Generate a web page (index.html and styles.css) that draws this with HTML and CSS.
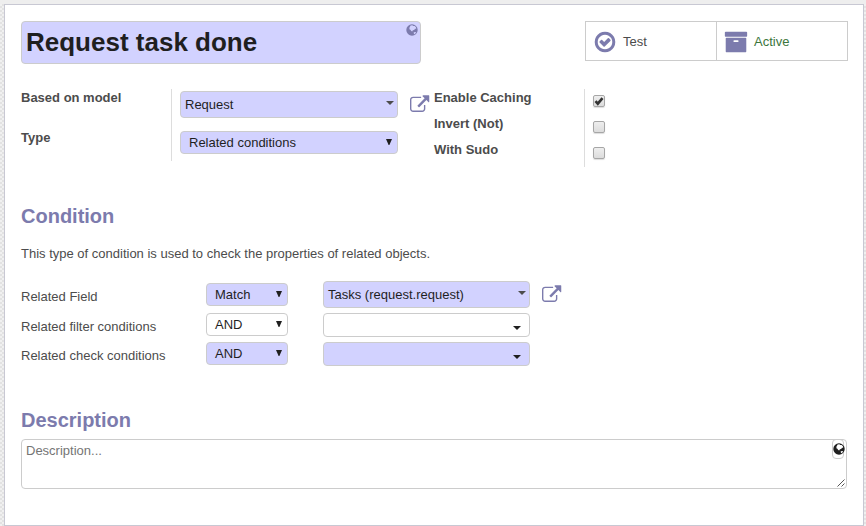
FILE: index.html
```html
<!DOCTYPE html>
<html lang="en">
<head>
<meta charset="utf-8">
<title>Request task done</title>
<link rel="stylesheet" href="styles.css">
</head>
<body>
<svg class="defs" aria-hidden="true">
  <symbol id="check" viewBox="0 0 1792 1792"><path d="M1299 813l-422 422q-19 19-45 19t-45-19l-294-294q-19-19-19-45t19-45l102-102q19-19 45-19t45 19l147 147 275-275q19-19 45-19t45 19l102 102q19 19 19 45t-19 45zm141 83q0-148-73-273t-198-198-273-73-273 73-198 198-73 273 73 273 198 198 273 73 273-73 198-198 73-273zm224 0q0 209-103 385.5t-279.5 279.5-385.5 103-385.5-103-279.5-279.5-103-385.5 103-385.5 279.5-279.5 385.5-103 385.5 103 279.5 279.5 103 385.5z"/></symbol>
  <symbol id="archive" viewBox="0 0 1792 1792"><path d="M1088 832q0-26-19-45t-45-19h-256q-26 0-45 19t-19 45 19 45 45 19h256q26 0 45-19t19-45zm576-192v960q0 26-19 45t-45 19h-1408q-26 0-45-19t-19-45v-960q0-26 19-45t45-19h1408q26 0 45 19t19 45zm64-448v256q0 26-19 45t-45 19h-1536q-26 0-45-19t-19-45v-256q0-26 19-45t45-19h1536q26 0 45 19t19 45z"/></symbol>
  <symbol id="external" viewBox="0 0 1792 1792"><path d="M1408 928v320q0 119-84.5 203.5t-203.5 84.5h-832q-119 0-203.5-84.5t-84.5-203.5v-832q0-119 84.5-203.5t203.5-84.5h704q14 0 23 9t9 23v64q0 14-9 23t-23 9h-704q-66 0-113 47t-47 113v832q0 66 47 113t113 47h832q66 0 113-47t47-113v-320q0-14 9-23t23-9h64q14 0 23 9t9 23zm384-864v512q0 26-19 45t-45 19-45-19l-176-176-652 652q-10 10-23 10t-23-10l-114-114q-10-10-10-23t10-23l652-652-176-176q-19-19-19-45t19-45 45-19h512q26 0 45 19t19 45z"/></symbol>
  <symbol id="globe" viewBox="0 0 12 12"><path fill-rule="evenodd" d="M6 .3a5.700 5.700 0 1 0 0 11.400A5.700 5.700 0 0 0 6 .3zM4.600 1.500L6.300 1.300l1 .7 1.300-.1 1.300 1.400.3 1.500-1.200 0-.8 1.200-1.300.3-.7 1.200-1-.5-.8-1.200-1-.6.1-1.600.6-1.100zM7.600 8.500l1.400-.6 1.100.4-.7 1.200-1.300.8z"/></symbol>
  <symbol id="caret" viewBox="0 0 8 4"><path d="M0 0h8L4 4z"/></symbol>
  <symbol id="arrow" viewBox="0 0 6 6"><path d="M0 0h6L3.400 6h-.8z"/></symbol>
</svg>
<main class="sheet">
  <header class="top">
    <div class="title field required">Request task done<svg class="title-globe"><use href="#globe"/></svg></div>
    <div class="buttons">
      <div class="stat"><svg><use href="#check"/></svg><span>Test</span></div>
      <div class="stat active"><svg><use href="#archive"/></svg><span>Active</span></div>
    </div>
  </header>

  <section class="groups">
    <div class="labels model-labels"><b>Based on model</b><b>Type</b></div>
    <div class="model-fields">
      <div class="with-link">
        <div class="field required many">Request<svg class="caret soft"><use href="#caret"/></svg></div>
        <svg class="external"><use href="#external"/></svg>
      </div>
      <div class="field required select">Related conditions<svg class="arrow"><use href="#arrow"/></svg></div>
    </div>
    <div class="labels option-labels"><b>Enable Caching</b><b>Invert (Not)</b><b>With Sudo</b></div>
    <div class="checks">
      <span class="box"><svg viewBox="0 0 10 10"><path d="M1.500 5.200L3.800 7.700 8.500 2.200"/></svg></span>
      <span class="box"></span>
      <span class="box"></span>
    </div>
  </section>

  <h2>Condition</h2>
  <p class="help">This type of condition is used to check the properties of related objects.</p>

  <section class="rows">
    <div class="row main-row">
      <span>Related Field</span>
      <div class="field required select">Match<svg class="arrow"><use href="#arrow"/></svg></div>
      <div class="field required many">Tasks (request.request)<svg class="caret soft"><use href="#caret"/></svg></div>
      <svg class="external"><use href="#external"/></svg>
    </div>
    <div class="row">
      <span>Related filter conditions</span>
      <div class="field select">AND<svg class="arrow"><use href="#arrow"/></svg></div>
      <div class="field tags"><svg class="caret"><use href="#caret"/></svg></div>
    </div>
    <div class="row">
      <span>Related check conditions</span>
      <div class="field required select">AND<svg class="arrow"><use href="#arrow"/></svg></div>
      <div class="field required tags"><svg class="caret"><use href="#caret"/></svg></div>
    </div>
  </section>

  <h2 class="desc-heading">Description</h2>
  <div class="field area">Description...
    <span class="translate"><svg><use href="#globe"/></svg></span>
    <svg class="grip" viewBox="0 0 8 8"><path d="M.5 7.500l7-7M4.500 7.500l3-3"/></svg>
  </div>
</main>
</body>
</html>
```
FILE: styles.css
```css
* { box-sizing: border-box; }

body {
  margin: 0;
  padding: 4px 2px 0 4px;
  height: 526px;
  overflow: hidden;
  background: #eee repeating-conic-gradient(#e2e2e2 0 25%, #f0f0f0 0 50%) 0 0 / 4px 4px;
  box-shadow: inset 0 4px #eee;
  font: 13px/18px "Liberation Sans", Arial, sans-serif;
  color: #4c4c4c;
}

svg { display: block; fill: currentColor; flex: none; }
.defs { position: absolute; width: 0; height: 0; }

.sheet {
  width: 860px;
  height: 522px;
  padding: 16px 15px 0 16px;
  background: #fff;
  border: 1px solid #c8c8d3;
}

.top { display: flex; justify-content: space-between; align-items: flex-start; }

.field {
  position: relative;
  display: flex;
  align-items: center;
  border: 1px solid #ccc;
  border-radius: 4px;
  background: #fff;
  color: #1f1f1f;
}
.required { background: #d2d2ff; }

.title {
  width: 400px;
  height: 43px;
  padding: 0 0 2px 4px;
  font-size: 26px;
  font-weight: bold;
}
.title-globe {
  position: absolute;
  top: 2px;
  right: 2px;
  width: 12px;
  height: 12px;
  color: #7c7bad;
}

.buttons { display: flex; width: 263px; height: 40px; border: 1px solid #ccc; }
.stat { display: flex; align-items: center; width: 130px; padding: 1px 0 0 6.5px; gap: 6.5px; }
.stat svg { width: 24px; height: 24px; color: #7c7bad; }
.stat span { padding-top: 1px; }
.active { width: 131px; border-left: 1px solid #ccc; color: #3c763d; }

.groups { display: flex; align-items: flex-start; margin-top: 25px; }
.labels { display: flex; flex-direction: column; }
.model-labels { width: 150px; gap: 22px; }
.model-fields {
  display: flex;
  flex-direction: column;
  gap: 13px;
  width: 263px;
  height: 72px;
  padding: 2px 0 0 8px;
  border-left: 1px solid #ddd;
}
.with-link { display: flex; gap: 12px; }
.many { width: 218px; height: 27px; padding-left: 4px; }
.select { width: 218px; height: 23px; padding-left: 8px; }
.external { width: 19.5px; height: 20px; margin-top: 3.5px; color: #7c7bad; }
.caret { position: absolute; width: 8px; height: 4px; }
.soft { top: 9px; right: 3px; color: #4c4c4c; }
.arrow { position: absolute; top: 7px; right: 5px; width: 6px; height: 6px; }

.option-labels { width: 150px; gap: 8px; }
.checks {
  display: flex;
  flex-direction: column;
  gap: 14px;
  height: 78px;
  padding: 6px 0 0 8px;
  border-left: 1px solid #ddd;
}
.box {
  width: 12px;
  height: 12px;
  border: 1px solid #a6a6a6;
  border-radius: 2px;
  background: linear-gradient(#eee, #dcdcdc);
  box-shadow: 0 1px 1px #ddd;
}
.box svg { width: 10px; height: 10px; fill: none; stroke: #333; stroke-width: 2.6; }

h2 { margin: 37px 0 0; font-size: 20px; line-height: 24px; color: #7c7bad; }
.help { margin: 17px 0 0; }

.rows { margin-top: 18px; }
.row {
  display: grid;
  grid-template-columns: 185px 82px 242px 32px;
  height: 24px;
  margin-bottom: 5px;
}
.row > span { padding-top: 5px; }
.row .select { width: 82px; }
.row .many, .row .tags { width: 207px; margin-left: 35px; }
.row .external { margin-left: 12px; }
.main-row { height: 27px; }
.main-row > span { padding-top: 7px; }
.main-row .select { margin-top: 2px; }
.tags { height: 24px; }
.tags .caret { top: 12px; right: 8px; }

.desc-heading { margin-top: 42px; }
.area {
  width: 826px;
  height: 50px;
  margin-top: 7px;
  padding: 2px 4px;
  align-items: flex-start;
  color: #757575;
}
.translate {
  position: absolute;
  top: -1px;
  right: 2px;
  width: 12px;
  height: 20px;
  padding-top: 3px;
  border: 1px solid #ccc;
  border-radius: 4px;
  color: #1f1f1f;
}
.translate svg { width: 12px; height: 12px; margin-left: -.5px; }
.grip { position: absolute; right: 1px; bottom: 1px; width: 8px; height: 8px; fill: none; stroke: #555; }
```
